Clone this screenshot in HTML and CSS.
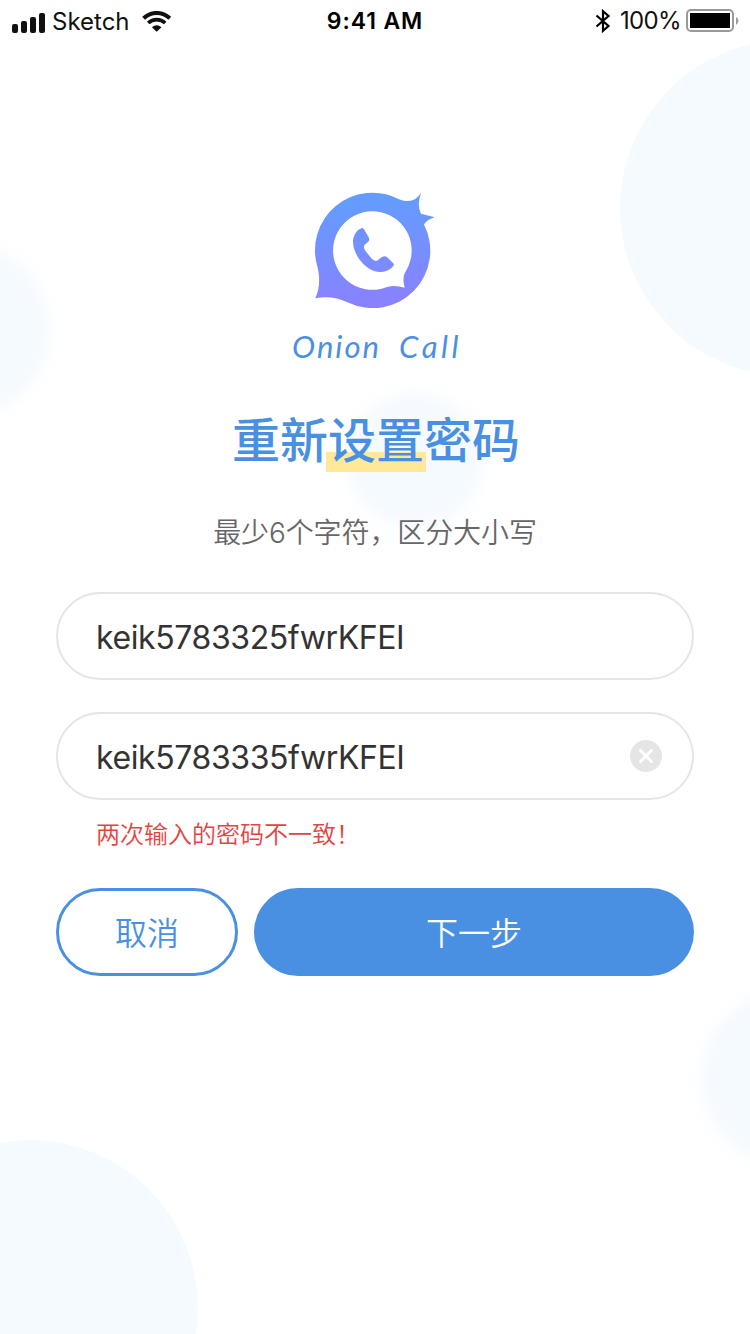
FILE: index.html
```html
<!DOCTYPE html>
<html lang="zh-CN">
<head>
<meta charset="utf-8">
<title>Onion Call</title>
<link rel="stylesheet" href="styles.css">
</head>
<body>
<div class="screen">
  <div class="bubble bubble-top"></div>
  <div class="bubble bubble-left"></div>
  <div class="bubble bubble-middle"></div>
  <div class="bubble bubble-right"></div>
  <div class="bubble bubble-bottom"></div>

  <header class="status">
    <div class="status-left">
      <svg class="signal" width="34" height="20" viewBox="0 0 34 20" fill="#111"><rect x="0" y="11" width="6" height="9" rx="2"/><rect x="9" y="8" width="6" height="12" rx="2"/><rect x="18" y="4" width="6" height="16" rx="2"/><rect x="27" y="0" width="6" height="20" rx="2"/></svg>
      <span class="carrier">Sketch</span>
      <svg class="wifi" width="30" height="22" viewBox="0 0 30 22" fill="none" stroke="#111"><path d="M1.600 7.200a19 19 0 0 1 26.200 0" stroke-width="4"/><path d="M6.200 12a12.500 12.500 0 0 1 17 0" stroke-width="3.700"/><path d="M9.900 16.200q4.800-4 9.600 0L14.700 20.800z" fill="#111" stroke="none"/></svg>
    </div>
    <span class="time">9:41 AM</span>
    <div class="status-right">
      <svg class="bluetooth" width="16" height="24" viewBox="0 0 16 24" fill="none" stroke="#000" stroke-width="2.200"><path d="M1.500 6.500 13.500 17 8 21.800V2.200L13.500 7 1.500 17.500"/></svg>
      <span class="percent">100%</span>
      <svg class="battery" width="54" height="24" viewBox="0 0 54 24"><rect x="1" y="1" width="46" height="21" rx="4" fill="none" stroke="#999" stroke-width="2"/><rect x="4" y="4" width="40" height="15" fill="#000"/><path d="M50 8q5 3.500 0 8z" fill="#999"/></svg>
    </div>
  </header>

  <main class="content">
    <svg class="logo" width="122" height="120" viewBox="314 190 122 120">
      <defs><linearGradient id="brand" gradientUnits="userSpaceOnUse" x1="370" y1="192" x2="380" y2="308"><stop offset="0" stop-color="#619eff"/><stop offset="1" stop-color="#8b80ff"/></linearGradient></defs>
      <path fill="url(#brand)" d="M315.200 298.300C320 289 320 277 317.500 267A57.500 57.500 0 0 1 399 199.200Q414 205 421.300 192.500Q416.500 205 421 213.700L434.800 217.200Q426 220 424 224.500A57.500 57.500 0 0 1 348 302.500Q332 295 315.200 298.300Z"/>
      <path fill="#fff" d="M404.700 287.800Q401.500 277 406.500 270A39.300 39.300 0 1 0 387 287Q395 284.500 404.700 287.800Z"/>
      <path fill="url(#brand)" d="M362 228Q356 229.500 353.300 238C351 250 361 266 374 271Q384 274 391.500 268Q395 265 393.500 263.500L387.500 257.500Q384 255 380.500 258L377.500 260.500Q375 262 371.500 258.500L365.500 251Q362.500 247 365 244.500L368.500 241.500Q370 239.500 368.500 237L364.500 230Q363.300 227.700 362 228Z"/>
    </svg>
    <div class="brand"><span>Onion</span><span class="brand-call">Call</span></div>
    <h1 class="title">重新<span class="marked">设置</span>密码</h1>
    <p class="hint">最少6个字符，区分大小写</p>
    <form class="form">
      <div class="field"><span class="value">keik5783325fwrKFEI</span></div>
      <div class="field"><span class="value">keik5783335fwrKFEI</span>
        <svg class="clear" width="32" height="32" viewBox="0 0 32 32"><circle cx="16" cy="16" r="16" fill="#e5e5e5"/><path d="m10.500 10.500 11 11m0-11-11 11" stroke="#fff" stroke-width="3" stroke-linecap="round"/></svg>
      </div>
      <p class="error">两次输入的密码不一致！</p>
      <div class="actions"><button type="button" class="btn cancel">取消</button><button type="button" class="btn next">下一步</button></div>
    </form>
  </main>
</div>
</body>
</html>
```

FILE: styles.css
```css
* { box-sizing: border-box; }
body { margin: 0; background: #fff; }
.screen {
  position: relative;
  width: 750px;
  height: 1334px;
  overflow: hidden;
  font-family: Inter, "Noto Sans CJK SC", sans-serif;
}
.bubble { position: absolute; border-radius: 50%; background: #f5faff; }
.bubble-top { left: 620px; top: 40px; width: 336px; height: 336px; }
.bubble-left { left: -126px; top: 242px; width: 176px; height: 176px; filter: blur(8px); }
.bubble-middle { left: 347px; top: 392px; width: 136px; height: 136px; filter: blur(8px); }
.bubble-right { left: 701px; top: 990px; width: 176px; height: 176px; filter: blur(8px); }
.bubble-bottom { left: -138px; top: 1140px; width: 336px; height: 336px; }

.status {
  position: relative;
  display: grid;
  grid-template-columns: 1fr auto 1fr;
  align-items: center;
  height: 40px;
  padding: 2px 10px 0 12px;
  color: #111;
  font-size: 24px;
  line-height: 36px;
}
.status-left, .status-right { display: flex; align-items: center; }
.status-right { justify-content: flex-end; margin-right: 4px; padding-bottom: 1px; }
.signal { margin: 3px 6px 0 0; }
.carrier { width: 78px; margin-top: 2px; font-size: 24px; white-space: nowrap; }
.wifi { margin: 2px 0 0 12px; }
.time { font-size: 23px; font-weight: 600; color: #000; letter-spacing: .9px; margin: 0 0 1px -2px; }
.bluetooth { margin-right: 9px; }
.percent { width: 60px; font-size: 24px; letter-spacing: -.7px; margin: 1px 6px 0 0; white-space: nowrap; }
.battery { margin-right: -4px; }

.content { display: flex; position: relative; flex-direction: column; align-items: center; padding: 150px 56px 0; }
.logo { display: block; }
.brand {
  display: flex;
  gap: 18px;
  height: 50px;
  margin-top: 11px;
  padding-left: 4px;
  font: italic 400 31px/50px Lato, sans-serif;
  letter-spacing: 2px;
  color: #4a90e2;
}
.brand-call { letter-spacing: 3.500px; }
.title { margin: 30px 0 0; padding-left: 2px; font: 500 48px/72px "Noto Sans CJK SC", sans-serif; color: #4a90e2; }
.marked {
  margin: 0 -2px;
  padding: 0 2px;
  background: linear-gradient(#ffe898, #ffe898) 0 100% / 100% 20px no-repeat;
}
.hint { margin: 40px 0 0; font: 350 28px/40px Inter, "Noto Sans CJK SC", sans-serif; letter-spacing: -.1px; color: #666; }
.form { width: 638px; margin-top: 39px; }
.field {
  display: flex;
  align-items: center;
  justify-content: space-between;
  height: 88px;
  margin-bottom: 32px;
  padding: 2px 30px 0 38px;
  border: 2px solid #e5e5e5;
  border-radius: 44px;
  background: #fff;
}
.value { font-size: 32px; letter-spacing: -.4px; color: #333; }
.clear { margin-top: -2px; }
.error { margin: -16px 0 0 40px; font: 350 24px/34px "Noto Sans CJK SC", sans-serif; color: #e64340; }
.actions { display: flex; gap: 16px; margin-top: 38px; }
.btn { height: 88px; padding: 0 0 2px; border-radius: 44px; font: 350 32px/44px "Noto Sans CJK SC", sans-serif; }
.cancel { width: 182px; border: 3px solid #4a90e2; background: #fff; color: #4a90e2; }
.next { flex: 1; border: 0; background: #4a90e2; color: #fff; }
```
